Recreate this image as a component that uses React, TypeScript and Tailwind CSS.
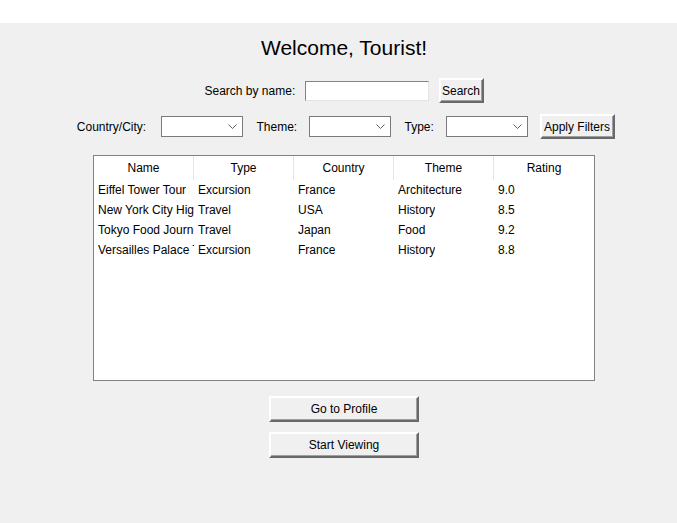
const rows = [
  ['Eiffel Tower Tour', 'Excursion', 'France', 'Architecture', '9.0'],
  ['New York City Highlights', 'Travel', 'USA', 'History', '8.5'],
  ['Tokyo Food Journey', 'Travel', 'Japan', 'Food', '9.2'],
  ['Versailles Palace Tour', 'Excursion', 'France', 'History', '8.8'],
]

const columns = ['Name', 'Type', 'Country', 'Theme', 'Rating']

const RaisedButton = ({ children, className = '' }) => (
  <button
    className={`flex items-center justify-center bg-[#f0f0f0] border-2 border-t-white border-l-white border-r-[#696969] border-b-[#696969] shadow-[inset_-1px_-1px_0_#a0a0a0] text-[12px] text-black whitespace-nowrap ${className}`}
  >
    {children}
  </button>
)

const Combo = () => (
  <div className="w-[82px] h-[21px] bg-white border border-[#7a7a7a] flex items-center justify-end pr-[5px]">
    <svg width="9" height="5" viewBox="0 0 9 5">
      <path d="M0.5 0.5 L4.5 4.5 L8.5 0.5" fill="none" stroke="#606060" strokeWidth="1" />
    </svg>
  </div>
)

export default function App() {
  return (
    <div className="w-[677px] h-[523px] flex flex-col font-['Liberation_Sans',Arial,sans-serif] text-black">
      <div className="h-[23px] bg-white" />
      <div className="flex-1 bg-[#f0f0f0] flex flex-col items-center pl-[11px]">
        <h1 className="mt-[13px] text-[21px] leading-[24px]">Welcome, Tourist!</h1>

        <div className="mt-[18px] flex items-center h-[25px] text-[12px]">
          <span className="w-[87px] text-center whitespace-nowrap">Search by name:</span>
          <div className="ml-[13px] w-[124px] h-[20px] bg-white border border-t-[#828282] border-l-[#828282] border-r-[#e3e3e3] border-b-[#e3e3e3]" />
          <RaisedButton className="ml-[10px] w-[45px] h-[25px]">Search</RaisedButton>
        </div>

        <div className="mt-[11px] flex items-center h-[25px] text-[12px] pl-[2px]">
          <span className="w-[72px] text-center whitespace-nowrap">Country/City:</span>
          <div className="ml-[13px]"><Combo /></div>
          <span className="ml-[14px] w-[39px] text-center">Theme:</span>
          <div className="ml-[13px]"><Combo /></div>
          <span className="ml-[14px] w-[28px] text-center">Type:</span>
          <div className="ml-[13px]"><Combo /></div>
          <RaisedButton className="ml-[12px] w-[75px] h-[25px]">Apply Filters</RaisedButton>
        </div>

        <div className="mt-[16px] w-[502px] h-[226px] bg-white border border-[#828282] text-[12px]">
          <div className="flex h-[24px]">
            {columns.map((c, i) => (
              <div
                key={c}
                className={`w-[100px] flex items-center justify-center ${i < 4 ? 'border-r border-[#e5e5e5]' : ''}`}
              >
                {c}
              </div>
            ))}
          </div>
          {rows.map((r) => (
            <div key={r[0]} className="flex h-[20px]">
              {r.map((cell, i) => (
                <div key={i} className="w-[100px] pl-[4px] flex items-center overflow-hidden whitespace-nowrap">
                  <span className="block overflow-hidden">{cell}</span>
                </div>
              ))}
            </div>
          ))}
        </div>

        <RaisedButton className="mt-[15px] w-[150px] h-[26px]">Go to Profile</RaisedButton>
        <RaisedButton className="mt-[10px] w-[150px] h-[26px]">Start Viewing</RaisedButton>
      </div>
    </div>
  )
}
